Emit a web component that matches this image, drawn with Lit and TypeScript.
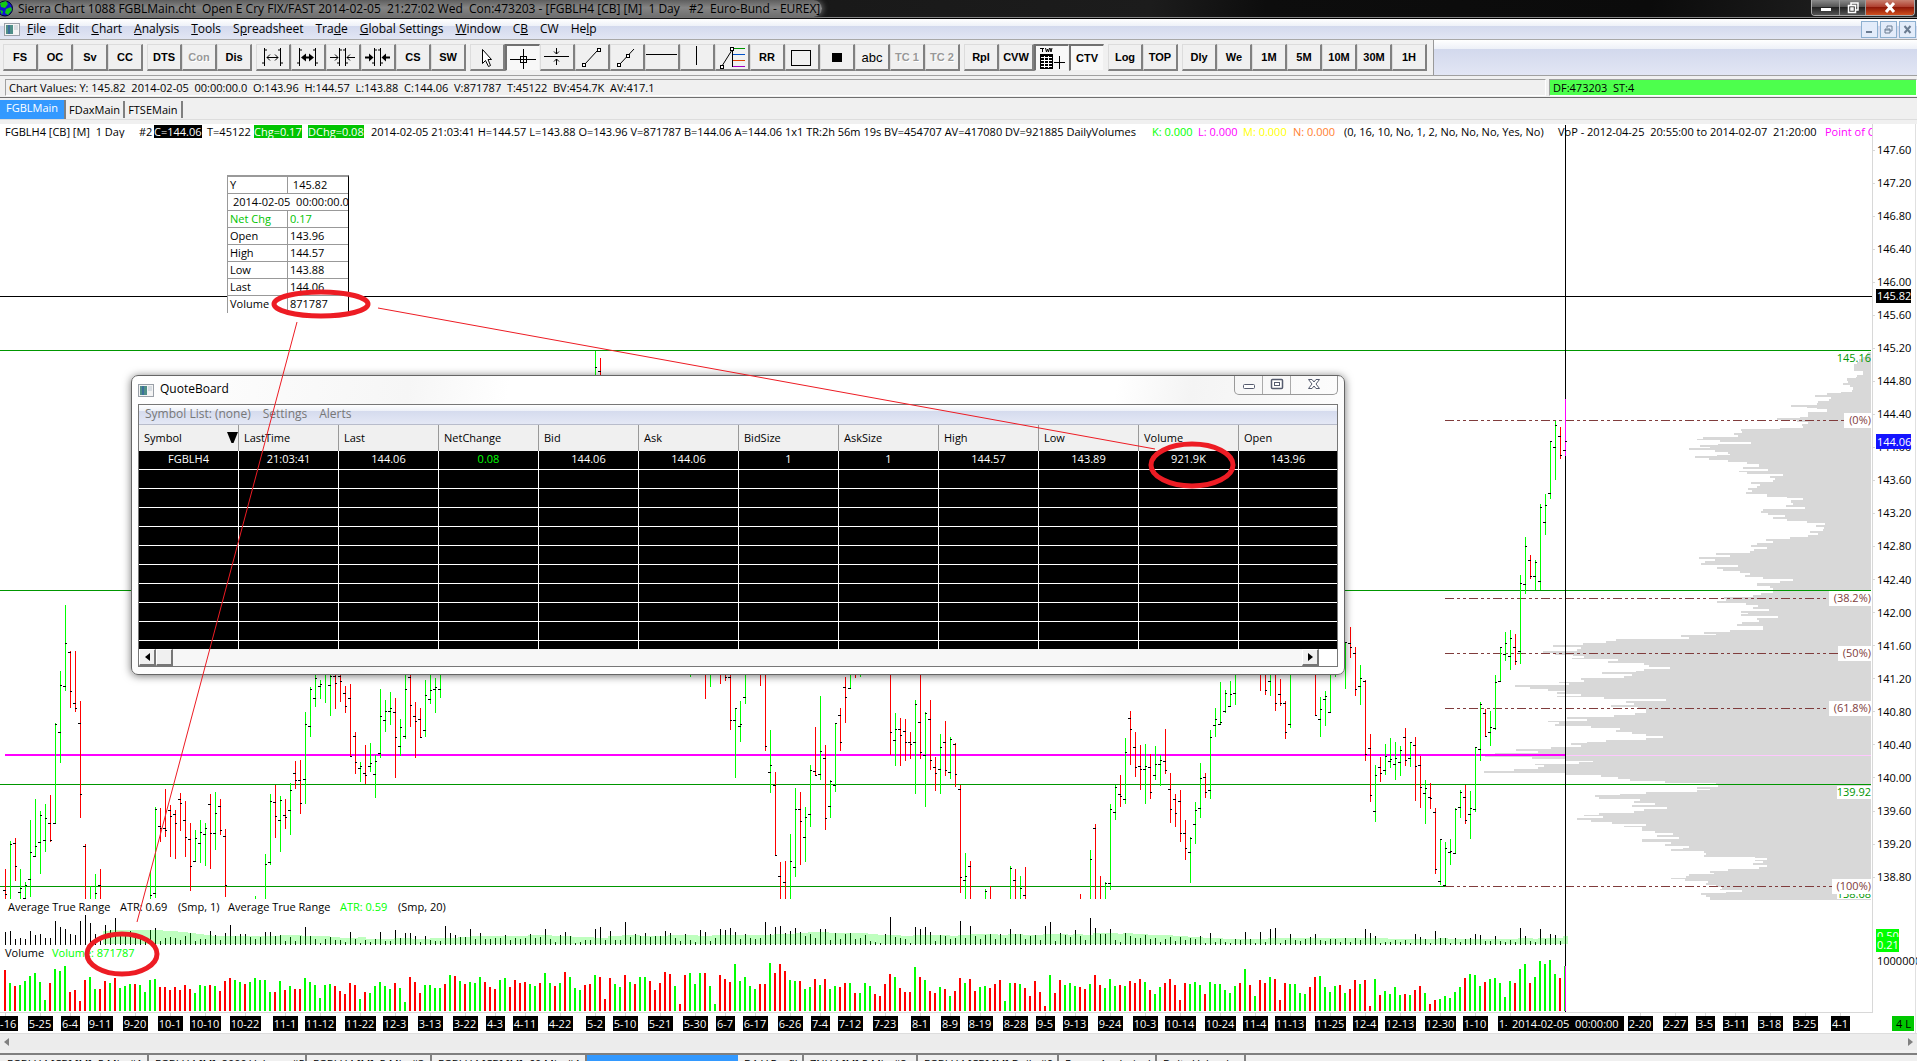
import { LitElement, html, css, svg, nothing } from "lit";
import { customElement } from "lit/decorators.js";
import { classMap } from "lit/directives/class-map.js";

/* ---------- series data ---------- */

const GREEN = "#00ff00";
const RED = "#ff0000";
const MAGENTA = "#ff00ff";
const LEVEL = "#009600";
const FIB = "#803c3c";

const STEP = 5;
const barX = (i: number) => 5 + i * STEP;
const PRICE_BASE = 590;

// bar index, direction, high, low, open, close; "-" marks a tick that is hidden
const CANDLES = `
0 r 279 309 300 304|1 g 251 309 - 254|2 r 248 291 253 276|3 g 279 309 302 298|4 g 292 309 308 295|5 g 230 307 289 262
6 g 209 267 266 256|7 g 221 284 252 225|8 g 214 262 250 228|9 r 205 252 233 250|10 g 133 234 233 134|11 g 81 173 142 95
12 g 15 101 96 53|13 r 61 118 62 101|14 r 61 122 113 118|15 r 111 228 133 204|16 r 254 309 256 -|17 g 296 309 - -
18 g 284 309 - 303|19 r 279 309 295 -|29 g 281 309 - 305|30 g 217 308 303 219|31 r 218 252 236 238|32 r 199 247 238 240
33 r 215 267 220 226|34 r 220 269 224 233|35 r 203 241 209 213|36 r 211 267 230 247|37 r 233 301 249 276|38 g 240 272 271 248
39 g 230 273 253 242|40 g 233 276 244 238|41 r 204 279 214 243|42 g 202 260 243 223|43 r 209 245 216 240|44 r 239 307 246 295
50 g 306 309 - -|52 g 264 309 - 274|53 g 204 275 272 211|54 r 195 248 212 226|55 g 206 262 230 210|56 r 209 239 225 227
57 g 193 245 220 200|58 r 171 199 183 190|59 r 170 224 190 213|60 g 122 214 189 134|61 g 97 147 136 99|62 g 80 117 108 88
63 g 90 109 96 94|64 g 80 113 - -|65 g 80 126 95 86|66 r 80 119 86 93|67 r 80 112 86 91|68 r 96 123 103 116
69 r 94 166 108 166|70 r 142 184 146 172|71 g 172 192 178 176|72 r 155 194 183 185|73 g 153 182 176 173|74 g 165 208 184 171
75 g 99 168 163 126|76 g 110 142 130 121|77 g 102 135 121 118|78 r 108 188 122 147|79 g 129 166 156 137|80 g 80 149 146 99
81 r 80 137 87 115|82 r 112 168 126 131|83 r 118 148 129 147|84 g 90 147 140 105|85 g 80 114 109 100|86 g 88 123 99 97
87 g 80 108 99 -|118 g -239 -200 - -223|119 r -232 -200 -219 -|137 g 80 87 - -|140 r 80 109 - -|141 g 80 97 - -
143 r 80 94 - -|144 r 80 91 - 87|145 r 80 140 87 130|146 g 118 188 130 118|147 g 111 152 136 134|148 g 80 114 107 -
151 r 80 96 - -|152 r 80 161 - 156|153 g 140 203 182 175|154 r 182 266 195 265|155 r 272 309 286 -|156 r 271 309 292 -
157 g 244 309 - 271|158 g 198 287 277 219|159 r 202 275 219 231|160 g 217 272 247 227|161 g 175 237 224 180|162 r 137 186 181 185
163 g 106 190 184 161|164 r 155 240 168 228|165 g 190 228 216 191|166 g 133 202 195 133|167 r 118 161 125 152|168 r 87 133 97 107
169 g 80 99 98 -|170 r 80 88 - -|171 g 80 87 - -|177 r 80 165 - 142|178 g 123 176 150 139|179 r 128 176 139 145
180 r 129 171 141 152|181 r 142 169 152 154|182 g 110 204 152 114|183 r 80 169 132 162|184 g 122 217 165 123|185 r 110 180 129 170
186 r 167 201 177 183|187 g 144 204 179 157|188 r 131 186 152 180|189 g 147 189 182 149|190 r 153 197 154 184|191 r 195 303 199 287
192 g 263 309 290 286|193 r 271 309 276 -|196 g 299 309 - 301|197 r 296 309 - -|201 g 276 309 - 278|202 r 279 309 290 -
203 g 286 309 - 298|204 r 277 309 305 -|215 r 304 309 - -|217 g 260 309 - 269|218 r 234 309 238 -|219 r 286 309 - -
220 g 292 309 - 293|221 g 214 300 293 219|222 g 195 230 222 197|223 r 185 217 204 206|224 g 148 214 209 162|225 r 121 175 128 139
226 r 142 187 157 177|227 r 155 200 176 179|228 g 154 214 179 176|229 r 164 209 177 202|230 g 156 190 185 174|231 g 165 196 174 170
232 r 139 184 171 180|233 r 183 233 199 219|234 r 204 237 209 223|235 r 200 252 211 243|236 r 230 270 243 258|237 g 247 293 262 248
238 g 212 254 234 220|239 g 173 228 218 188|240 r 183 208 187 202|241 g 140 209 200 147|242 g 118 147 135 129|243 g 92 135 134 132
244 g 100 123 121 103|245 g 91 117 116 104|246 g 80 115 103 -|251 r 80 101 - -|252 r 80 105 - 100|253 g 80 106 91 -
254 r 80 121 - 113|255 r 89 116 104 113|256 r 111 149 113 142|257 g 80 138 134 -|262 r 80 126 - 125|263 g 107 147 129 119
264 g 101 136 109 106|265 g 80 123 122 -|266 g 80 87 - -|268 g 52 99 - 52|269 r 37 68 53 57|270 r 57 106 63 99
271 g 75 115 96 88|272 r 90 171 91 164|273 r 144 212 158 205|274 g 175 232 221 185|275 r 167 192 177 183|276 g 154 185 180 166
277 g 148 178 171 169|278 g 152 190 174 168|279 g 156 186 172 160|280 r 138 176 147 170|281 g 152 177 168 152|282 r 147 211 155 176
283 r 166 218 175 197|284 g 190 234 203 198|285 r 193 219 207 208|286 r 218 284 222 279|287 g 249 295 291 249|288 g 252 296 295 258
289 g 249 275 262 261|290 g 218 264 263 219|291 g 200 228 217 202|292 r 195 234 207 230|293 g 201 249 224 218|294 g 157 222 219 157
295 g 112 171 159 114|296 r 119 147 123 146|297 g 121 156 142 137|298 g 85 140 138 92|299 g 57 92 91 57|300 g 42 71 64 53
301 g 40 80 66 48|302 r 44 75 57 71|303 g -15 74 61 -7|304 g -53 4 -6 -44|305 r -35 -11 -30 -14|306 g -30 0 -14 -28
307 g -86 0 -9 -83|308 g -96 -55 -68 -85|309 g -149 -91 -97 -149|310 g -169 -110 -143 -165|311 r -163 -131 -154 -135|312 m -191 -134 -140 -149`;

const candles = CANDLES.trim()
  .split(/[|\n]/)
  .map((row) => {
    const [i, dir, hi, lo, open, close] = row.trim().split(" ");
    return { x: barX(+i), dir, hi: +hi, lo: +lo, open, close };
  });

const ATR = `13 14 6 7 6 14 10 11 7 7 24 18 16 11 10 24 30 22 11 7 20 15 27 12 9 14 12 7 6 15 17 4 7 8 7 5 9 12 4 6 6 14 10 5 12 20 9 11 11 8
6 8 13 13 9 10 4 8 4 9 18 9 6 2 6 8 5 5 3 13 6 2 5 3 6 13 4 4 15 7 12 12 9 3 9 5 4 4 19 12 10 8 8 16 6 12 6 6 7 7
10 5 7 6 7 11 7 8 16 6 3 10 13 9 2 3 5 5 16 18 5 14 5 5 23 8 11 9 12 8 9 9 14 12 7 4 11 5 3 15 13 4 7 16 15 17 13 6 11 7
6 7 23 11 18 19 12 14 17 13 9 11 7 16 16 5 12 6 11 12 6 7 10 4 3 2 11 28 8 7 6 2 18 16 18 13 4 10 9 6 7 24 7 19 9 6 10 11 6 11
7 16 11 11 6 9 10 5 19 23 4 12 10 8 15 9 5 27 17 11 11 16 5 3 12 9 7 7 10 6 7 3 6 8 4 8 5 7 6 9 2 12 3 6 3 2 6 5 13 6
2 13 3 16 17 2 5 11 5 4 6 8 11 5 4 6 6 3 7 3 7 5 16 12 9 2 3 3 5 3 5 2 11 8 6 2 14 7 7 2 7 3 6 7 11 10 4 4 9 4
3 5 3 17 9 4 3 16 6 11 10 4`.trim().split(/\s+/).map(Number);

const VOLUME = `r41 g28 r25 g26 g30 g35 g38 g29 g11 r28 g42 g40 g45 r19 r21 r10 r31 g34 g22 r22 r30 g28 r33 g23 g25 g27 r27 g26 g19 g31
g32 r24 r24 r21 r24 r21 r26 r22 g18 g26 g25 r26 g25 r20 r30 r33 g31 g29 r27 g29 g33 g31 g31 g19 r19 g30 r21 g25 r22 r22
g33 g29 g26 g13 g26 g27 r25 r20 r17 r28 r26 g12 r19 g18 g25 g29 g25 g22 r28 g23 g9 r34 r29 r18 g26 g26 g23 g23 r27 g36
r35 g30 r27 g29 g28 g34 r29 r24 r22 g31 g33 r24 r31 r28 r29 g27 g25 r28 g38 g28 r25 g28 r39 g34 g23 g21 r26 r27 g36 r34
r12 r33 g27 g24 r36 g29 r27 g34 g34 r30 r21 r28 r39 r37 g25 r7 r36 g38 g27 g38 r38 g25 g7 r36 r32 r29 g47 g30 g34 g25
g22 r27 r27 g48 r38 r47 r40 g31 g30 r30 g22 g24 r32 g26 r32 g22 g25 r24 r28 g28 r18 g18 g28 g25 r17 r15 r27 r37 g34 r23
r19 r19 g44 r34 g31 r20 r18 g24 r22 g15 r20 r33 g28 r32 r20 g24 g25 r23 r27 r31 g10 g28 r28 g27 r23 r15 r30 r19 r5 g36
r18 r31 g26 g28 g25 r24 r22 g27 r36 r26 g23 g32 g25 r26 g25 r30 r28 r32 g29 r21 g17 g24 r28 r32 r26 r11 r28 g27 g29 g26
r17 g29 g27 g27 g21 g18 g25 r28 g42 r26 g15 r31 r28 g34 r32 r11 r28 g27 g27 g18 g17 r24 r34 g35 g24 g19 g25 r26 g18 r22
r31 g27 r31 r5 g32 r16 g20 g17 g24 g16 r17 g16 r21 r25 g18 r7 r11 g12 g15 g13 g19 g24 r33 g37 g36 g25 r29 g32 g33 g28
g14 g30 r28 g42 g47 r28 g34 g50 g47 g51 g37 r33 g45`.trim().split(/\s+/);

// smoothed range: x where a level starts, level height
const ATR_AVERAGE: [number, number][] = [
  [103, 13], [110, 14], [158, 14], [163, 13], [178, 12], [188, 11], [196, 10], [204, 9], [212, 8], [280, 9], [302, 8], [330, 7],
  [340, 6], [358, 7], [366, 5], [394, 6], [412, 5], [430, 6], [458, 7], [470, 8], [528, 9], [552, 8], [572, 7], [594, 6],
  [608, 8], [622, 9], [640, 8], [668, 9], [698, 8], [712, 9], [774, 10], [795, 11], [808, 12], [829, 11], [868, 10], [878, 9],
  [901, 8], [913, 9], [950, 8], [958, 9], [970, 10], [998, 9], [1008, 10], [1023, 9], [1043, 10], [1068, 9], [1073, 10],
  [1083, 9], [1093, 11], [1118, 10], [1123, 11], [1133, 10], [1148, 9], [1173, 8], [1188, 7], [1203, 6], [1223, 5],
  [1268, 6], [1388, 5], [1438, 6], [1448, 5], [1518, 6], [1533, 5], [1538, 6], [1563, 8], [1568, 8],
];

// volume-by-price edges: row, left edge (thirds of a pixel from 1420,340)
const PROFILE_TOP = `35 1345 40 1340 50 1330 58 1318 66 1310 72 1303 78 1303 86 1303 92 1328 96 1330 104 1310 110 1308 115 1282 122 1285 128 1270
136 1290 142 1300 150 1297 156 1262 160 1222 166 1185 172 1232 178 1228 184 1195 190 1190 195 1113 200 1160 205 1190 208 1220 215 1165
225 1165 232 1140 235 1071 241 1130 247 1165 253 1145 259 1150 264 1080 268 962 274 965 280 942 286 955 292 848 296 831 301 900 306 992
312 895 316 840 322 870 325 807 331 885 337 925 343 930 346 890 349 825 354 868 360 925 366 980 372 1017 380 970 386 1045 392 957
396 980 402 1088 408 1050 414 1065 420 1060 427 993 433 1020 439 1010 445 985 451 997 457 978 463 1040 470 1100 475 1150 480 1112
488 1120 495 1098 502 1155 508 1030 514 1022 520 1045 526 1095 532 1060 538 1100 543 1160 548 1215 555 1188 562 1212 568 1210 574 1170
580 1195 586 1165 592 1110 598 1038 604 1060 610 1010 616 992 622 1040 628 1002 634 990 640 888 646 930 652 837 658 885 664 855
670 843 676 955 682 890 688 910 694 960 700 990 706 975 712 1030 718 1120 724 1080 728 1012 734 1010 738 1050 744 1060 750 1085`;

// lower half: row in thirds of a pixel from 590, left edge in 2.45 units from 1277
const PROFILE_BOTTOM = `4 1215 10 1185 16 1165 22 1095 28 1100 33 1078 39 1150 45 1178 51 1165 56 1205 62 1138 68 1155 73 1138 79 1227 85 1175
91 1180 97 1140 103 1128 109 1190 115 1190 121 1110 127 1045 132 1075 136 990 142 1010 148 830 154 805 160 750 165 675 171 745 177 735
183 652 188 680 194 725 199 752 203 722 208 835 214 812 220 900 226 912 232 962 238 900 243 880 247 797 252 870 258 850 264 745 270 752
275 690 280 715 286 582 291 620 297 665 302 705 307 685 312 745 317 685 322 800 328 952 334 855 339 875 344 818 350 885 356 905 362 905
368 878 374 825 380 710 386 760 392 665 397 690 402 680 407 770 413 840 419 830 425 870 431 905 437 945 443 905 449 805 455 760 460 720
466 745 472 672 478 585 484 640 489 535 495 510 500 625 506 705 512 775 517 740 521 632 526 655 532 640 538 580 544 507 549 705 554 795
560 835 566 865 572 950 578 1075 584 1080 590 1030 596 1060 601 1030 606 905 611 840 616 779 622 790 628 890 634 875 640 925 646 870
652 955 658 900 664 875 668 790 674 752 679 798 685 735 690 770 696 820 702 905 707 850 712 895 718 895 724 925 730 970 736 930 741 985
746 895 751 894 757 965 762 950 768 1010 773 995 778 965 783 1045 788 1050 794 1045 800 1170 805 1200 809 1170 814 1190 820 1165
825 1200 830 1180 836 1105 842 1060 848 1070 853 1010 858 1002 863 965 868 1000 874 1055 880 1050 885 1075 890 1090 896 1085 900 1140
905 1100 910 1040 916 1050 922 1060 927 1062`;

const RIGHT = 1871;

function profilePath(): string {
  const pts: [number, number][] = [];
  const read = (src: string, x0: number, sx: number, y0: number) => {
    const n = src.trim().split(/\s+/).map(Number);
    for (let k = 0; k < n.length; k += 2) {
      pts.push([Math.round(x0 + n[k + 1] / sx), Math.round(y0 + n[k] / 3)]);
    }
  };
  read(PROFILE_TOP, 1420, 3, 340);
  read(PROFILE_BOTTOM, 1277, 2.45, 590);
  let d = `M${RIGHT} ${pts[0][1]}`;
  pts.forEach(([x, y], k) => {
    const next = pts[k + 1]?.[1] ?? y + 1;
    d += `H${x}V${next}`;
  });
  return d + `H${RIGHT}Z`;
}

function averagePath(): string {
  let d = "M103 944";
  ATR_AVERAGE.forEach(([x, h]) => (d += `H${x}V${944 - h}`));
  return d + "V944Z";
}

const DATES: [number, string][] = [
  [5, "5-16"], [40, "5-25"], [70, "6-4"], [100, "9-11"], [135, "9-20"], [170, "10-1"], [205, "10-10"], [245, "10-22"],
  [285, "11-1"], [320, "11-12"], [360, "11-22"], [395, "12-3"], [430, "3-13"], [465, "3-22"], [495, "4-3"], [525, "4-11"],
  [560, "4-22"], [595, "5-2"], [625, "5-10"], [660, "5-21"], [695, "5-30"], [725, "6-7"], [755, "6-17"], [790, "6-26"],
  [820, "7-4"], [850, "7-12"], [885, "7-23"], [920, "8-1"], [950, "8-9"], [980, "8-19"], [1015, "8-28"], [1045, "9-5"],
  [1075, "9-13"], [1110, "9-24"], [1145, "10-3"], [1180, "10-14"], [1220, "10-24"], [1255, "11-4"], [1290, "11-13"],
  [1330, "11-25"], [1365, "12-4"], [1400, "12-13"], [1440, "12-30"], [1475, "1-10"], [1510, "1-20"], [1640, "2-20"],
  [1675, "2-27"], [1705, "3-5"], [1735, "3-11"], [1770, "3-18"], [1805, "3-25"], [1840, "4-1"],
];

const FIBS: [number, string, number][] = [
  [420, "(0%)", 27], [598, "(38.2%)", 42], [653, "(50%)", 33], [708, "(61.8%)", 42], [886, "(100%)", 39],
];

/* ---------- toolbar ---------- */

const line = (d: string, stroke = "#000", w = 1) =>
  svg`<path d=${d} stroke=${stroke} stroke-width=${w} fill="none"/>`;

const ICONS: Record<string, unknown> = {
  widen: svg`${line("M4.5 2V20M20.5 2V20M4.5 4H7M4.5 17H2M20.5 4H18M20.5 17H23")}${line("M7 11.5H18M10 8.5L7 11.5L10 14.5M15 8.5L18 11.5L15 14.5")}`,
  widenBold: svg`${line("M4.5 2V20M20.5 2V20M4.5 4H7M4.5 17H2M20.5 4H18M20.5 17H23")}<path d="M6 11.5L11 7.5V15.5ZM19 11.5L14 7.5V15.5Z"/>${line("M9 11.5H16", "#000", 2)}`,
  narrow: svg`${line("M9.5 2V20M15.5 2V20M9.5 4H12M9.5 17H7M15.5 4H13M15.5 17H18")}${line("M0 11.5H8M5 8.5L8 11.5L5 14.5M25 11.5H17M20 8.5L17 11.5L20 14.5")}`,
  narrowBold: svg`${line("M9.5 2V20M15.5 2V20M9.5 4H12M9.5 17H7M15.5 4H13M15.5 17H18")}<path d="M8.5 11.5L4 7.5V15.5ZM16.5 11.5L21 7.5V15.5Z"/>${line("M0 11.5H5M20 11.5H25", "#000", 2)}`,
  arrow: svg`<path d="M8.5 3.5V17.5L11.5 14.5L14.5 20.5L16.5 19.5L14 13.5H17.5Z" fill="#fff" stroke="#000"/>`,
  cross: svg`${line("M0 12.5H26M13.5 2V22")}<rect x="10.5" y="9.5" width="6" height="6" fill="none" stroke="#000"/>`,
  hzoom: svg`${line("M0 10.5H25")}${line("M12.5 2V8M10 5.5L12.5 8L15 5.5M12.5 19V13M10 15.5L12.5 13L15 15.5")}`,
  trend: svg`${line("M6 18L18 5")}<rect x="3.5" y="17.5" width="3" height="3" fill="#fff" stroke="#000"/><rect x="18.5" y="2.5" width="3" height="3" fill="#fff" stroke="#000"/>`,
  ray: svg`${line("M6 18L20 3")}<rect x="3.5" y="17.5" width="3" height="3" fill="#fff" stroke="#000"/><rect x="12.5" y="8.5" width="3" height="3" fill="#fff" stroke="#000"/>`,
  hline: line("M-3 8.5H28"),
  vline: line("M12.5 0V19"),
  fib: svg`${line("M13 2.5H26", LEVEL)}${line("M13 8.5H26", "#0050c8")}${line("M13 14.5H26", "#e04000")}${line("M13 20.5H26", "#a000c0")}${line("M13.5 3V21M3 20L13 4")}<rect x="1.5" y="19.5" width="3" height="3" fill="#fff" stroke="#000"/><rect x="11.5" y="1.5" width="3" height="3" fill="#fff" stroke="#000"/>`,
  rect: svg`<rect x="2.5" y="4.5" width="19" height="15" fill="none" stroke="#000"/>`,
  square: svg`<rect x="8" y="7" width="10" height="9"/>`,
  tvw: svg`${line("M1 1.5H5M3.5 1V5M6.5 1L7.5 5L8.5 2L9.5 5L10.5 1M11 1L12 5L13 1")}<rect x="1" y="7" width="13" height="15"/>${line("M2 10.5H13M2 13.5H13M2 16.5H13M2 19.5H13M5.5 9V21M9.5 9V21", "#fff")}${line("M15 15.5H26M20.5 9V22")}`,
};

type Tool = { t?: string; icon?: string; name?: string; off?: boolean; on?: boolean; plain?: boolean };
const TOOLS: Tool[][] = [
  [{ t: "FS" }, { t: "OC" }, { t: "Sv" }, { t: "CC" }],
  [{ t: "DTS" }, { t: "Con", off: true }, { t: "Dis" }],
  [
    { icon: "widen", name: "Increase spacing" }, { icon: "widenBold", name: "Increase spacing more" },
    { icon: "narrow", name: "Decrease spacing" }, { icon: "narrowBold", name: "Decrease spacing more" },
    { t: "CS" }, { t: "SW" },
  ],
  [
    { icon: "arrow", name: "Pointer" }, { icon: "cross", name: "Crosshair", on: true }, { icon: "hzoom", name: "Vertical scale" },
    { icon: "trend", name: "Line" }, { icon: "ray", name: "Ray" }, { icon: "hline", name: "Horizontal line" },
    { icon: "vline", name: "Vertical line" }, { icon: "fib", name: "Retracement" }, { t: "RR" },
    { icon: "rect", name: "Rectangle" }, { icon: "square", name: "Filled rectangle" }, { t: "abc", plain: true },
    { t: "TC 1", off: true }, { t: "TC 2", off: true },
  ],
  [{ t: "Rpl" }, { t: "CVW" }, { icon: "tvw", name: "Tool values window", on: true }, { t: "CTV", on: true }],
  [{ t: "Log" }, { t: "TOP" }],
  [{ t: "Dly" }, { t: "We" }, { t: "1M" }, { t: "5M" }, { t: "10M" }, { t: "30M" }, { t: "1H" }],
];

const MENUS: [string, string, string][] = [
  ["", "F", "ile"], ["", "E", "dit"], ["", "C", "hart"], ["", "A", "nalysis"], ["", "T", "ools"], ["S", "p", "readsheet"],
  ["Tra", "d", "e"], ["", "G", "lobal Settings"], ["", "W", "indow"], ["C", "B", ""], ["CW", "", ""], ["He", "l", "p"],
];

const QUOTE: [string, string][] = [
  ["Symbol", "FGBLH4"], ["LastTime", "21:03:41"], ["Last", "144.06"], ["NetChange", "0.08"], ["Bid", "144.06"], ["Ask", "144.06"],
  ["BidSize", "1"], ["AskSize", "1"], ["High", "144.57"], ["Low", "143.89"], ["Volume", "921.9K"], ["Open", "143.96"],
];

const BOTTOM_TABS: [number, string][] = [
  [148, "FGBLH4 [CB] [M]  5 Min #1"], [158, "FGBLH4 [M]  8000 Volume #5"], [125, "FGBLH4 [M]  5 Min #3"],
  [155, "FGBLH4 [CB] [M]  60 Min #4"], [151, ""], [66, "D1 V Profile"], [114, "ZNH4 [M] 5 Min #8"],
  [141, "FGBLH4 [CB] [M] Daily #9"], [98, "Range Analysis.d"], [89, "Delta Vol.scd"],
];

const appIcon = html`<svg class="doc" width="16" height="13" viewBox="0 0 16 13" aria-hidden="true">
  <rect x=".5" y=".5" width="15" height="12" fill="#f4f4f4" stroke="#9aa0a8" />
  <rect x="2" y="2" width="7" height="9" fill="#4f8f88" />
  <rect x="4" y="2" width="2" height="9" fill="#3d6f9c" />
  <rect x="10" y="2" width="4" height="5" fill="#d8dde2" />
</svg>`;

/* ---------- chart ---------- */

@customElement("price-chart")
export class PriceChart extends LitElement {
  static styles = css`
    :host { display: block; position: absolute; inset: 0; overflow: hidden; }
    .plot { display: block; width: 100%; height: 100%; font: 11px "Open Sans", "Noto Sans", sans-serif; }
    .shapes { shape-rendering: crispEdges; }
  `;

  private candles() {
    return candles.map((c) => {
      const color = c.dir === "g" ? GREEN : c.dir === "r" ? RED : MAGENTA;
      return svg`
        <rect x=${c.x} y=${PRICE_BASE + c.hi} width="1" height=${c.lo - c.hi} fill=${color}/>
        ${c.open !== "-" ? svg`<rect x=${c.x - 2} y=${PRICE_BASE + +c.open} width="3" height="1"/>` : nothing}
        ${c.close !== "-" ? svg`<rect x=${c.x} y=${PRICE_BASE + +c.close} width="2" height="1"/>` : nothing}`;
    });
  }

  render() {
    const prices = Array.from({ length: 23 }, (_, k) => 147.6 - k * 0.4);
    return html`<svg class="plot" role="img" aria-label="FGBLH4 daily price chart">
      <g transform="translate(0 -124)">
        <g class="shapes">
          <path d=${profilePath()} fill="#d8d8d8" />
          <rect x="1565" y="755" width="306" height="1" fill="#ffc8ff" />
          <rect x="5" y="754" width="1560" height="2" fill=${MAGENTA} />
          ${[350, 590, 784].map((y) => svg`<rect x="0" y=${y} width=${RIGHT} height="1" fill=${LEVEL}/>`)}
          <rect x="0" y="886" width="1445" height="1" fill=${LEVEL} />
          ${FIBS.map(([y]) => svg`<path d="M1445 ${y}.5H${RIGHT}" stroke=${FIB} stroke-dasharray="9 3 3 3 3 3"/>`)}
          <rect x="1565" y="125" width="1" height="888" />
          <rect x="0" y="296" width="1872" height="1" />
          ${this.candles()}
          ${ATR.map((h, i) => svg`<rect x=${barX(i)} y=${945 - h} width="1" height=${h}/>`)}
          <path d=${averagePath()} fill=${GREEN} fill-opacity=".25" />
          ${VOLUME.map((v, i) => {
            const h = +v.slice(1);
            return svg`<rect x=${barX(i) - 1} y=${1011 - h} width="2" height=${h} fill=${v[0] === "g" ? GREEN : RED}/>`;
          })}
          <rect x="1565" y="966" width="1" height="45" fill=${MAGENTA} />
          <rect x="0" y="1012" width="1873" height="1" fill="#d8d8d8" />
          <rect x="1872" y="124" width="1" height="889" fill="#d8d8d8" />
          ${DATES.map(([x]) => svg`<rect x=${x} y="1012" width="1" height="4" fill="#d8d8d8"/>`)}
          ${prices.map((_, k) => svg`<rect x="1872" y=${Math.round(149.7 + k * 33.04)} width="3" height="1" fill="#d8d8d8"/>`)}
        </g>
        ${prices.map((p, k) => svg`<text x="1877" y=${Math.round(154 + k * 33.04)}>${p.toFixed(2)}</text>`)}
        <rect x="1876" y="289" width="35" height="14" /><text x="1877" y="300" fill="#fff">145.82</text>
        <rect x="1876" y="434" width="35" height="15" fill="#1414ff" /><text x="1877" y="446" fill="#fff">144.06</text>
        <text x="1871" y="362" fill=${LEVEL} text-anchor="end">145.16</text>
        <rect x="1837" y="786" width="34" height="13" fill="#fff" />
        <text x="1871" y="796" fill=${LEVEL} text-anchor="end">139.92</text>
        <rect x="1837" y="888" width="34" height="11" fill="#fff" />
        <text x="1871" y="898" fill=${LEVEL} text-anchor="end">138.68</text>
        ${FIBS.map(
          ([y, label, w]) => svg`<rect x=${RIGHT - w} y=${y - 7} width=${w} height="15" fill="#fff"/>
            <text x=${RIGHT} y=${y + 4} fill=${FIB} text-anchor="end">${label}</text>`,
        )}
        <text x="8" y="911">Average True Range</text>
        <text x="120" y="911">ATR: 0.69</text>
        <text x="178" y="911">(Smp, 1)</text>
        <text x="228" y="911">Average True Range</text>
        <text x="340" y="911" fill=${GREEN}>ATR: 0.59</text>
        <text x="398" y="911">(Smp, 20)</text>
        <text x="5" y="957">Volume</text>
        <text x="52" y="957" fill=${GREEN}>Volume: 871787</text>
        <rect x="1876" y="929" width="23" height="15" fill=${GREEN} /><text x="1877" y="940" fill="#fff">0.50</text>
        <rect x="1876" y="937" width="23" height="15" fill=${GREEN} /><text x="1877" y="949" fill="#fff">0.21</text>
        <text x="1877" y="965">1000000</text>
        ${DATES.map(
          ([x, t]) => svg`<rect x=${x - t.length * 3} y="1016" width=${t.length * 6 + 1} height="15"/>
            <text x=${x} y="1028" fill="#fff" text-anchor="middle">${t}</text>`,
        )}
        <rect x="1507" y="1016" width="117" height="15" />
        <text x="1512" y="1028" fill="#fff">2014-02-05&#160; 00:00:00</text>
        <rect x="1892" y="1016" width="22" height="15" fill="#00c800" /><text x="1896" y="1028">4 L</text>
        <rect x="1915" y="124" width="1" height="909" fill="#e0e0e0" />
      </g>
    </svg>`;
  }
}

/* ---------- quote board ---------- */

@customElement("quote-board")
export class QuoteBoard extends LitElement {
  static styles = css`
    :host { display: flex; flex-direction: column; box-sizing: border-box; height: 300px; padding: 0 6px 7px 6px; border: 1px solid #666;
      border-radius: 7px; background: linear-gradient(100deg, #fff, #f6f6f6 22%, #fff 30%, #fff 78%, #f4f4f4 84%, #fff);
      box-shadow: 0 1px 9px rgba(0, 0, 0, .55); font: 11px "Open Sans", "Noto Sans", sans-serif; }
    .title { display: flex; align-items: center; height: 28px; gap: 6px; }
    .name { flex: 1; font-size: 12px; line-height: 14px; padding-bottom: 2px; }
    .keys { align-self: flex-start; display: flex; height: 18px; border: 1px solid #999; border-top: 0; border-radius: 0 0 5px 5px; }
    .key { width: 28px; padding: 0; border: 0; border-right: 1px solid #aaa; background: none; }
    .key:last-child { width: 46px; border-right: 0; }
    .frame { flex: 1; display: flex; flex-direction: column; border: 1px solid #777; min-height: 0; }
    .menu { display: flex; gap: 12px; height: 19px; padding-left: 6px; background: linear-gradient(#fff, #eef1f8 30%, #d5dbee 32%, #e4e8f5); border-bottom: 1px solid #b8bccb; }
    .item { border: 0; padding: 0 0 2px; background: none; font: inherit; font-size: 12px; line-height: 14px; color: #777; }
    .grid { flex: 1; overflow: hidden; }
    .quotes { width: 100%; border-collapse: separate; border-spacing: 0; table-layout: fixed; }
    .head { width: 100px; height: 26px; padding: 0 0 2px 5px; box-sizing: border-box; text-align: left; font-weight: 400; background: #f0f0f0; border-right: 1px solid #999; }
    .head:last-child { width: auto; }
    .head:last-child, .cell:last-child { border-right: 0; }
    .label { display: flex; justify-content: space-between; align-items: center; }
    .cell { height: 19px; box-sizing: border-box; padding: 0; background: #000; color: #fff; text-align: center; vertical-align: top;
      border-right: 1px solid #fff; border-bottom: 1px solid #fff; line-height: 16px; }
    .cell.up { color: #00ff00; }
    .scroll { display: flex; height: 17px; background: #fff; }
    .track { flex: 1; display: flex; background: #f7f7f7; }
    .btn { width: 17px; padding: 0; border: 1px solid #fff; border-right: 2px solid #777; border-bottom: 2px solid #777; background: #f0f0f0; display: grid; place-items: center; box-sizing: border-box; }
    .pad { width: 18px; }
  `;
  render() {
    return html`
      <div class="title">
        ${appIcon}<span class="name">QuoteBoard</span>
        <div class="keys">
          <button class="key" aria-label="Minimize"><svg width="14" height="12" viewBox="0 0 14 12"><rect x="1.5" y="6.5" width="11" height="4" rx="1" fill="#fff" stroke="#555b6e" /></svg></button>
          <button class="key" aria-label="Restore"><svg width="14" height="12" viewBox="0 0 14 12"><rect x="1.5" y="1.5" width="11" height="9" rx="1" fill="#fff" stroke="#555b6e" stroke-width="1.5" /><rect x="4.5" y="4.5" width="5" height="3" fill="#fff" stroke="#555b6e" /></svg></button>
          <button class="key" aria-label="Close"><svg width="14" height="12" viewBox="0 0 14 12"><path d="M1.5 1.5H5L7 4L9 1.5H12.5L9 6L12.5 10.5H9L7 8L5 10.5H1.5L5 6Z" fill="#fff" stroke="#555b6e" /></svg></button>
        </div>
      </div>
      <div class="frame">
        <nav class="menu">
          <button class="item">Symbol List: (none)</button><button class="item">Settings</button><button class="item">Alerts</button>
        </nav>
        <div class="grid">
          <table class="quotes">
            <thead><tr>
              ${QUOTE.map(([h], i) => html`<th class="head" scope="col"><span class="label">${h}${i === 0
                ? html`<svg width="11" height="11" viewBox="0 0 11 11"><path d="M0 0H11L6.5 11H4.5Z" /></svg>` : nothing}</span></th>`)}
            </tr></thead>
            <tbody>
              <tr>${QUOTE.map(([h, v]) => html`<td class=${classMap({ cell: true, up: h === "NetChange" })}>${v}</td>`)}</tr>
              ${Array.from({ length: 10 }, () => html`<tr>${QUOTE.map(() => html`<td class="cell"></td>`)}</tr>`)}
            </tbody>
          </table>
        </div>
        <div class="scroll">
          <button class="btn" aria-label="Scroll left"><svg width="5" height="8" viewBox="0 0 5 8"><path d="M5 0V8L0 4Z" /></svg></button>
          <div class="track"><button class="btn" aria-label="Scroll thumb"></button></div>
          <button class="btn" aria-label="Scroll right"><svg width="5" height="8" viewBox="0 0 5 8"><path d="M0 0V8L5 4Z" /></svg></button>
          <span class="pad"></span>
        </div>
      </div>`;
  }
}

/* ---------- page ---------- */

@customElement("app-root")
export class AppRoot extends LitElement {
  static styles = css`
    :host { display: flex; flex-direction: column; height: 100vh; overflow: hidden; background: #f0f0f0; color: #000;
      font: 11px "Open Sans", "Noto Sans", sans-serif; }
    button { font: inherit; color: inherit; }
    .titlebar { display: flex; align-items: center; height: 17px; border-bottom: 1px solid #888; box-shadow: 0 1px #000;
      background: linear-gradient(100deg, #111, #1c1c1c 60%, #0d0d0d 66%, #0b0b0b 86%, #262626); }
    .caption { display: flex; align-items: center; gap: 5px; height: 17px; padding-right: 2px; font-size: 12px; line-height: 14px; white-space: pre;
      background: linear-gradient(#5e5e5e, #858585 45%, #6e6e6e); border-radius: 0 9px 9px 0; box-shadow: 2px 0 5px #555; }
    .fill { flex: 1; }
    .wkeys { align-self: flex-start; display: flex; height: 15px; margin-right: 2px; border: 1px solid #aaa; border-top: 0; border-radius: 0 0 4px 4px; overflow: hidden; }
    .wkey { width: 28px; padding: 0; border: 0; border-right: 1px solid #999; background: linear-gradient(#8a8a8a, #555 45%, #222 50%, #555); display: grid; place-items: center; }
    .wkey.max { width: 26px; }
    .wkey.close { width: 48px; border-right: 0; background: linear-gradient(#c88070, #b04030 45%, #901808 50%, #d05020); }
    .menubar { display: flex; align-items: center; gap: 12px; height: 20px; margin-top: 1px; padding: 0 1px 0 4px; border-bottom: 1px solid #a8a8a8;
      background: linear-gradient(#fff, #eef1f8 34%, #d3d9ed 36%, #e2e6f4); font-size: 12px; line-height: 16px; }
    .menubar .doc { margin-right: -5px; }
    .mitem { border: 0; padding: 0 0 1px; background: none; }
    .mdi { display: flex; gap: 2px; margin-left: auto; }
    .mkey { width: 17px; height: 17px; padding: 0; border: 1px solid #8eb0d0; background: #e3ecfa; display: grid; place-items: center; }
    .toolbar { display: flex; height: 35px; border-bottom: 1px solid #a0a0a0; background: linear-gradient(#fff, #eef1f8 25%, #d3d9ed 27%, #e2e6f4); }
    .tools { display: flex; gap: 4px; padding: 4px 6px 4px 3px; background: #f0f0f0; border-right: 1px solid #999; }
    .set { display: flex; }
    .tool { width: 35px; height: 27px; padding: 0; display: grid; place-items: center; box-sizing: border-box; font: bold 11px "Liberation Sans", Arial, sans-serif;
      background: #f0f0f0; border: 1px solid #dcdcdc; border-right: 2px solid #808080; border-bottom: 2px solid #808080; }
    .tool.off { color: #989898; text-shadow: 1px 1px #fff; }
    .tool.plain { font: 13px "Liberation Sans", Arial, sans-serif; }
    .tool.on { background: #f8f8f8; border: 1px solid #f0f0f0; border-top: 2px solid #707070; border-left: 2px solid #707070; }
    .status { display: flex; gap: 3px; height: 18px; margin-top: 3px; padding-left: 5px; border-bottom: 1px solid #6e6e6e; }
    .box { flex: 1; box-sizing: border-box; height: 17px; padding-left: 3px; line-height: 16px; white-space: pre; border: 1px solid #a0a0a0; border-right-color: #fff; border-bottom-color: #fff; }
    .box.feed { flex: 0 0 368px; background: #4dff4d; }
    .tabs { display: flex; align-items: flex-end; height: 20px; margin-top: 1px; border-bottom: 1px solid #ddd; }
    .tab { height: 17px; margin-bottom: 1px; padding: 0 3px; line-height: 14px; border: 0; border-right: 2px solid #808080; background: #f0f0f0; }
    .tab.on { height: 19px; margin: 0; padding: 0 6px 3px; background: #3399ff; color: #fff; }
    .chart { position: relative; flex: 1; margin-top: 4px; background: #fff; overflow: hidden; }
    .legend { position: relative; display: grid; align-items: center; width: calc(100% - 45px); height: 14px; line-height: 13px; overflow: hidden; white-space: pre; padding-left: 5px; box-sizing: border-box;
      grid-template-columns: 134px 15px 53px 47px 54px 63px 781px 46px 45px 50px 51px 214px 267px 1fr; }
    .chip { justify-self: start; color: #fff; }
    .black { background: #000; }
    .green { background: #00c400; }
    .k { color: #00ff00; }
    .l { color: #ff00ff; }
    .m { color: #ffff00; }
    .n { color: #ff8030; }
    .values { position: absolute; left: 227px; top: 51px; width: 122px; border-collapse: separate; border-spacing: 0; table-layout: fixed; background: #fff;
      border-top: 2px solid #999; border-left: 1px solid #999; border-right: 1px solid #000; }
    .vk, .vv { height: 17px; box-sizing: border-box; padding: 0 2px; line-height: 15px; text-align: left; vertical-align: top; font-weight: 400; border-bottom: 1px solid #999; white-space: pre; }
    .vk { border-right: 1px solid #999; }
    .values tr:last-child > * { border-bottom: 0; }
    .vv.wide { padding: 0 0 0 5px; }
    .gain { color: #00c400; }
    .board { position: absolute; left: 131px; top: 251px; width: 1214px; }
    .marks { position: absolute; inset: 0; width: 100%; height: 100%; pointer-events: none; }
    .hscroll { display: flex; justify-content: space-between; align-items: center; height: 16px; padding: 0 4px; border-top: 1px solid #ddd; background: #ececec; }
    .sbtn { border: 0; padding: 0; background: none; display: grid; }
    .btabs { display: flex; height: 6px; margin-top: 3px; overflow: hidden; border-top: 2px solid #808080; padding-left: 1px; }
    .btab { box-sizing: border-box; padding: 0 0 0 6px; height: 18px; border: 0; border-right: 2px solid #808080; background: #f0f0f0; text-align: left; white-space: pre; overflow: hidden; line-height: 18px; }
    .btab.on { background: #3399ff; border-right: 0; }
  `;

  private tool(t: Tool) {
    return html`<button class=${classMap({ tool: true, off: !!t.off, on: !!t.on, plain: !!t.plain })} ?disabled=${t.off} aria-label=${t.name ?? t.t}>
      ${t.icon ? html`<svg width="26" height="23" viewBox="0 0 26 23" overflow="visible">${ICONS[t.icon]}</svg>` : t.t}
    </button>`;
  }

  render() {
    return html`
      <header class="titlebar">
        <div class="caption">
          <svg width="13" height="17" viewBox="0 0 13 17" aria-hidden="true"><circle cx="5" cy="8.5" r="7.5" fill="#1414d0" stroke="#002" /><path d="M0 3L6 1L8 4L5 8L1 7ZM6 9L11 7L12 10L8 15L5 13ZM0 10L3 11L2 15Z" fill="#14c814" /></svg>
          <span>Sierra Chart 1088 FGBLMain.cht  Open E Cry FIX/FAST 2014-02-05  21:27:02 Wed  Con:473203 - [FGBLH4 [CB] [M]  1 Day   #2  Euro-Bund - EUREX]</span>
        </div>
        <span class="fill"></span>
        <div class="wkeys">
          <button class="wkey" aria-label="Minimize"><svg width="12" height="10" viewBox="0 0 12 10"><rect x="1" y="5" width="10" height="3" fill="#fff" /></svg></button>
          <button class="wkey max" aria-label="Restore"><svg width="12" height="12" viewBox="0 0 12 12"><path d="M4 3V1H11V8H9M1.5 3.5H8.5V10.5H1.5ZM4 6V8H6V6Z" fill="none" stroke="#fff" stroke-width="1.5" /></svg></button>
          <button class="wkey close" aria-label="Close"><svg width="12" height="11" viewBox="0 0 12 11"><path d="M2 1L10 10M10 1L2 10" stroke="#fff" stroke-width="3" /></svg></button>
        </div>
      </header>
      <nav class="menubar">
        ${appIcon}
        ${MENUS.map(([a, u, b]) => html`<button class="mitem">${a}<u>${u}</u>${b}</button>`)}
        <div class="mdi">
          <button class="mkey" aria-label="Minimize chart"><svg width="9" height="9" viewBox="0 0 9 9"><rect x="1" y="6" width="6" height="2" fill="#6b7c92" /></svg></button>
          <button class="mkey" aria-label="Restore chart"><svg width="9" height="9" viewBox="0 0 9 9"><path d="M3 3V1H8V6H6M1 4H6V8H1ZM1 5H6" fill="none" stroke="#6b7c92" /></svg></button>
          <button class="mkey" aria-label="Close chart"><svg width="9" height="9" viewBox="0 0 9 9"><path d="M1.5 1L7.5 8M7.5 1L1.5 8" stroke="#6b7c92" stroke-width="2" /></svg></button>
        </div>
      </nav>
      <div class="toolbar"><div class="tools">${TOOLS.map((g) => html`<div class="set">${g.map((t) => this.tool(t))}</div>`)}</div></div>
      <div class="status">
        <div class="box">Chart Values: Y: 145.82  2014-02-05  00:00:00.0  O:143.96  H:144.57  L:143.88  C:144.06  V:871787  T:45122  BV:454.7K  AV:417.1</div>
        <div class="box feed">DF:473203  ST:4</div>
      </div>
      <nav class="tabs"><button class="tab on">FGBLMain</button><button class="tab">FDaxMain</button><button class="tab">FTSEMain</button></nav>
      <main class="chart">
        <price-chart></price-chart>
        <div class="legend">
          <span>FGBLH4 [CB] [M]  1 Day</span><span>#2</span><span class="chip black">C=144.06</span><span>T=45122</span>
          <span class="chip green">Chg=0.17</span><span class="chip green">DChg=0.08</span>
          <span>2014-02-05 21:03:41 H=144.57 L=143.88 O=143.96 V=871787 B=144.06 A=144.06 1x1 TR:2h 56m 19s BV=454707 AV=417080 DV=921885 DailyVolumes</span>
          <span class="k">K: 0.000</span><span class="l">L: 0.000</span><span class="m">M: 0.000</span><span class="n">N: 0.000</span>
          <span>(0, 16, 10, No, 1, 2, No, No, No, Yes, No)</span><span>VoP - 2012-04-25  20:55:00 to 2014-02-07  21:20:00</span><span class="l">Point of Control</span>
        </div>
        <table class="values">
          <tbody>
            <tr><th class="vk" scope="row">Y</th><td class="vv"> 145.82</td></tr>
            <tr><td class="vv wide" colspan="2">2014-02-05  00:00:00.0</td></tr>
            <tr class="gain"><th class="vk" scope="row">Net Chg</th><td class="vv">0.17</td></tr>
            ${[["Open", "143.96"], ["High", "144.57"], ["Low", "143.88"], ["Last", "144.06"], ["Volume", "871787"]].map(
              ([k, v]) => html`<tr><th class="vk" scope="row">${k}</th><td class="vv">${v}</td></tr>`,
            )}
          </tbody>
        </table>
        <quote-board class="board"></quote-board>
        <svg class="marks" aria-hidden="true">
          <g transform="translate(0 -124)" fill="none" stroke="#ed1c24">
            <ellipse cx="321" cy="304" rx="47" ry="12" stroke-width="5" />
            <ellipse cx="1192" cy="465" rx="41" ry="21" stroke-width="5" />
            <ellipse cx="122" cy="954" rx="35" ry="20" stroke-width="5" />
            <path d="M378 308L1155 449M297 322L137 922" />
          </g>
        </svg>
      </main>
      <div class="hscroll">
        <button class="sbtn" aria-label="Scroll left"><svg width="5" height="8" viewBox="0 0 5 8"><path d="M5 0V8L0 4Z" fill="#808080" /></svg></button>
        <button class="sbtn" aria-label="Scroll right"><svg width="5" height="8" viewBox="0 0 5 8"><path d="M0 0V8L5 4Z" fill="#808080" /></svg></button>
      </div>
      <nav class="btabs">
        ${BOTTOM_TABS.map(([w, t]) => html`<button class=${classMap({ btab: true, on: t === "" })} style="width:${w}px" aria-label=${t || "Active chart"}>${t}</button>`)}
      </nav>`;
  }
}
